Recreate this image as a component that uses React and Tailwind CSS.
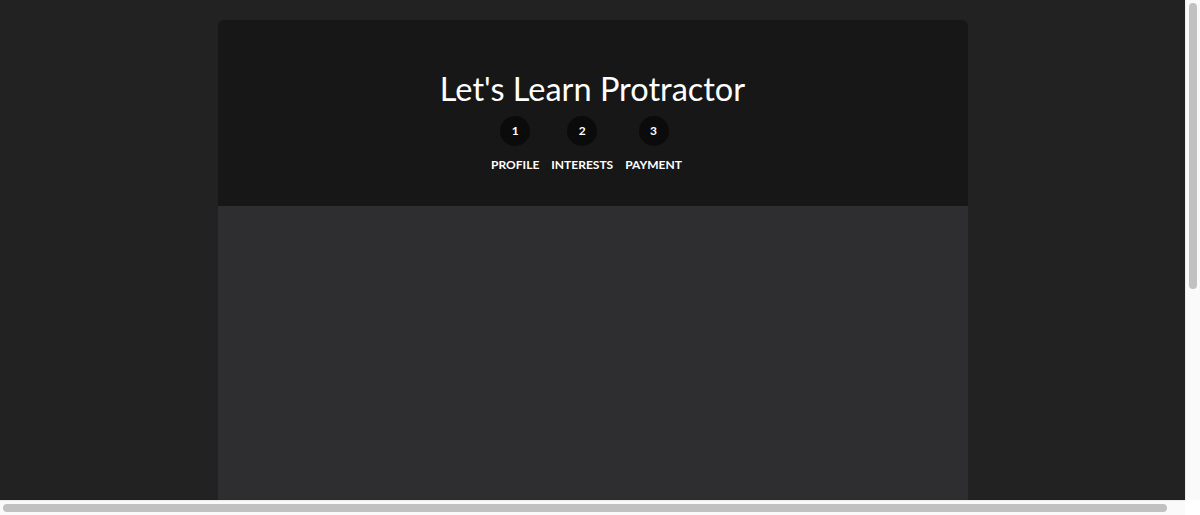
const steps = [
  { n: 1, label: 'Profile' },
  { n: 2, label: 'Interests' },
  { n: 3, label: 'Payment' },
];

function Wizard() {
  return (
    <div className="pt-5">
      <div className="mx-auto w-[750px] rounded-md overflow-hidden">
        <header className="bg-[#171717] h-[186px] flex flex-col items-center pt-[49px]">
          <h1 className="text-white text-[32.5px] leading-[40px]">Let's Learn Protractor</h1>
          <div className="flex mt-[7px]">
            {steps.map((s) => (
              <div key={s.n} className="flex flex-col items-center mr-[12px]">
                <div className="w-[30px] h-[30px] rounded-full bg-[#0b0b0b] flex items-center justify-center text-white text-[12px] font-bold">
                  {s.n}
                </div>
                <span className="mt-[12px] text-white text-[12px] font-bold uppercase leading-[14px]">{s.label}</span>
              </div>
            ))}
          </div>
        </header>
        <section className="bg-[#2e2d30] h-[669px]"></section>
      </div>
    </div>
  );
}

export default function App() {
  return (
    <div className="h-[515px] w-[1200px] overflow-hidden grid grid-cols-[1185px_15px] grid-rows-[500px_15px] font-['Lato',sans-serif]">
      <main className="bg-[#222222] overflow-hidden">
        <Wizard />
      </main>
      <div className="bg-[#fafafa] border-l border-[#ececec] pt-[3px] pl-[3px]">
        <div className="w-[8px] h-[286px] rounded-full bg-[#c1c1c1]"></div>
      </div>
      <div className="bg-[#fafafa] border-t border-[#ececec] pt-[3px] pl-[3px]">
        <div className="w-[1164px] h-[8px] rounded-full bg-[#c1c1c1]"></div>
      </div>
      <div className="bg-white"></div>
    </div>
  );
}
